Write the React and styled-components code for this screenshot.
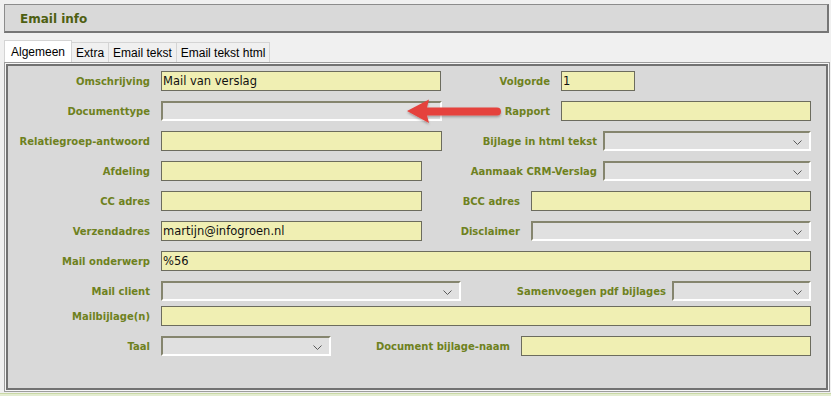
import React from "react";
import styled, { createGlobalStyle } from "styled-components";

const GlobalStyle = createGlobalStyle`
  html, body { margin: 0; padding: 0; background: #f0f0f0; }
  body { font-family: "DejaVu Sans", Verdana, sans-serif; }
`;

const Page = styled.div`
  position: relative;
  width: 831px;
  height: 396px;
  box-sizing: border-box;
  padding: 4px 1px 0 4px;
  overflow: hidden;
`;

const Header = styled.div`
  height: 29px;
  box-sizing: border-box;
  border: 1px solid #8c8c8c;
  border-right: 2px solid #767676;
  border-bottom: 2px solid #767676;
  background: #d9d9d9;
  display: flex;
  align-items: center;
  padding: 2px 0 0 15px;
  margin-right: 1px;
`;

const Title = styled.h1`
  margin: 0;
  font: bold 12px "DejaVu Sans", Verdana, sans-serif;
  color: #4e5f12;
`;

const TabBar = styled.div`
  display: flex;
  align-items: flex-end;
  height: 22px;
  margin-top: 7px;
`;

const Tab = styled.div`
  height: ${(p) => (p.$active ? 22 : 20)}px;
  box-sizing: border-box;
  padding: 0 ${(p) => (p.$active ? 6 : 4)}px;
  display: flex;
  align-items: center;
  font: 12px "Liberation Sans", Arial, sans-serif;
  color: #000;
  background: ${(p) => (p.$active ? "#ffffff" : "#f0f0f0")};
  border: 1px solid #d4d4d4;
  border-bottom: none;
  border-left-width: ${(p) => (p.$first ? 1 : 0)}px;
`;

const Panel = styled.div`
  height: 330px;
  box-sizing: border-box;
  border: 1px solid #9c9c9c;
  padding: 1px;
  background: #f6f6f6;
`;

const PanelBody = styled.div`
  height: 100%;
  box-sizing: border-box;
  border: 2px solid #727272;
  background: #d9d9d9;
  padding-top: 5px;
`;

const Row = styled.div`
  display: flex;
  align-items: center;
  height: 20px;
  margin-top: ${(p) => p.$mt ?? 10}px;
`;

const Label = styled.label`
  width: ${(p) => p.$w}px;
  flex: none;
  text-align: right;
  white-space: nowrap;
  font: bold 10px "DejaVu Sans", Verdana, sans-serif;
  color: #6e8120;
`;

const TextInput = styled.input`
  width: ${(p) => p.$w}px;
  margin-left: ${(p) => p.$ml ?? 11}px;
  height: 20px;
  box-sizing: border-box;
  border: 1px solid #6c6c5e;
  background: #f0efb3;
  padding: 0 1px;
  font: 11.5px "DejaVu Sans", Verdana, sans-serif;
  color: #111;
  outline: none;
  flex: none;
`;

const Select = styled.div`
  width: ${(p) => p.$w}px;
  margin-left: ${(p) => p.$ml ?? 11}px;
  height: 20px;
  box-sizing: border-box;
  border-top: 2px solid #85856e;
  border-left: 2px solid #85856e;
  border-bottom: 2px solid #ffffff;
  border-right: 2px solid #ffffff;
  background: #e0e0e0;
  display: flex;
  align-items: center;
  justify-content: flex-end;
  padding-right: 7px;
  flex: none;
`;

const Chevron = () => (
  <svg width="9" height="5" viewBox="0 0 9 5" style={{ marginTop: 3 }}>
    <path d="M0.5 0.5 L4.5 4.5 L8.5 0.5" fill="none" stroke="#5a5a5a" strokeWidth="1" />
  </svg>
);

const ArrowMark = styled.svg`
  position: absolute;
  left: 404px;
  top: 97px;
`;

const Footer = styled.div`
  margin-top: 1px;
  height: 4px;
  background: #e3ecd0;
  border-top: 1px solid #c9d8a6;
  margin-left: -4px;
  margin-right: -1px;
`;

const Dropdown = ({ w, ml }) => (
  <Select $w={w} $ml={ml}>
    <Chevron />
  </Select>
);

export default function App() {
  return (
    <>
      <GlobalStyle />
      <Page>
        <Header>
          <Title>Email info</Title>
        </Header>
        <TabBar>
          <Tab $active $first>Algemeen</Tab>
          <Tab>Extra</Tab>
          <Tab>Email tekst</Tab>
          <Tab>Email tekst html</Tab>
        </TabBar>
        <Panel>
          <PanelBody>
            <Row $mt={0}>
              <Label $w={142}>Omschrijving</Label>
              <TextInput $w={280} defaultValue="Mail van verslag" readOnly />
              <Label $w={109}>Volgorde</Label>
              <TextInput $w={74} defaultValue="1" readOnly />
            </Row>
            <Row>
              <Label $w={142}>Documenttype</Label>
              <Dropdown w={281} />
              <Label $w={108}>Rapport</Label>
              <TextInput $w={250} readOnly />
            </Row>
            <Row>
              <Label $w={142}>Relatiegroep-antwoord</Label>
              <TextInput $w={281} readOnly />
              <Label $w={155}>Bijlage in html tekst</Label>
              <Dropdown w={208} ml={6} />
            </Row>
            <Row>
              <Label $w={142}>Afdeling</Label>
              <TextInput $w={261} readOnly />
              <Label $w={175}>Aanmaak CRM-Verslag</Label>
              <Dropdown w={208} ml={6} />
            </Row>
            <Row>
              <Label $w={142}>CC adres</Label>
              <TextInput $w={261} readOnly />
              <Label $w={98}>BCC adres</Label>
              <TextInput $w={280} readOnly />
            </Row>
            <Row>
              <Label $w={142}>Verzendadres</Label>
              <TextInput $w={261} defaultValue="martijn@infogroen.nl" readOnly />
              <Label $w={98}>Disclaimer</Label>
              <Dropdown w={280} />
            </Row>
            <Row>
              <Label $w={142}>Mail onderwerp</Label>
              <TextInput $w={650} defaultValue="%56" readOnly />
            </Row>
            <Row>
              <Label $w={142}>Mail client</Label>
              <Dropdown w={300} />
              <Label $w={205}>Samenvoegen pdf bijlages</Label>
              <Dropdown w={139} ml={6} />
            </Row>
            <Row $mt={5}>
              <Label $w={142}>Mailbijlage(n)</Label>
              <TextInput $w={650} readOnly />
            </Row>
            <Row>
              <Label $w={142}>Taal</Label>
              <Dropdown w={170} />
              <Label $w={179}>Document bijlage-naam</Label>
              <TextInput $w={290} readOnly />
            </Row>
          </PanelBody>
        </Panel>
        <Footer />
        <ArrowMark width="100" height="30" viewBox="0 0 100 30">
          <defs>
            <filter id="sh" x="-10%" y="-30%" width="120%" height="160%">
              <feDropShadow dx="0" dy="1.5" stdDeviation="1" floodColor="#000" floodOpacity="0.3" />
            </filter>
          </defs>
          <g filter="url(#sh)" fill="#e5423c">
            <path d="M3 14 L25 2.5 L23 10.5 L93 10.5 Q97 10.5 97 14.5 Q97 18.5 93 18.5 L23 18.5 L25 26 Z" />
          </g>
        </ArrowMark>
      </Page>
    </>
  );
}
